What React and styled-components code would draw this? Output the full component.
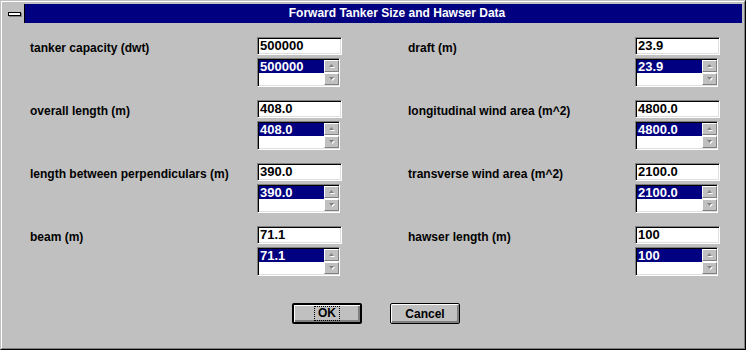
import React from 'react';
import styled, { createGlobalStyle } from 'styled-components';

const Global = createGlobalStyle`
  html, body { margin: 0; padding: 0; background: #c0c0c0; }
  body { font-family: "Liberation Sans", Arial, sans-serif; }
  * { box-sizing: border-box; }
`;

const Window = styled.div`
  width: 746px;
  height: 350px;
  background: #c0c0c0;
  border: 1px solid;
  border-color: #c0c0c0 #000 #000 #c0c0c0;
  display: flex;
  flex-direction: column;
`;

const Frame = styled.div`
  flex: 1;
  border: 1px solid;
  border-color: #fff #808080 #808080 #fff;
  padding: 2px;
  display: flex;
  flex-direction: column;
`;

const TitleBar = styled.div`
  height: 19px;
  display: flex;
  flex-shrink: 0;
`;

const SysBox = styled.div`
  width: 21px;
  background: #c0c0c0;
  border-right: 1px solid #000;
  padding: 8px 0 0 4px;
`;

const SysGlyph = styled.div`
  width: 13px;
  height: 4px;
  background: #fff;
  border: 1px solid #000;
  box-shadow: 1px 1px 0 #808080;
`;

const Caption = styled.div`
  flex: 1;
  background: #000080;
  color: #fff;
  font-weight: bold;
  font-size: 12px;
  line-height: 19px;
  text-align: center;
  padding-left: 27px;
`;

const Content = styled.div`
  padding: 14px 21px 0 26px;
  display: grid;
  grid-template-columns: 378px 1fr;
  row-gap: 13px;
`;

const Field = styled.div`
  display: flex;
  align-items: flex-start;
`;

const Label = styled.div`
  width: 227px;
  font-size: 12px;
  font-weight: bold;
  color: #000;
  line-height: 14px;
  padding-top: 4px;
`;

const Controls = styled.div`
  display: flex;
  flex-direction: column;
  gap: 3px;
`;

const sunken = `
  border: 1px solid;
  border-color: #808080 #fff #fff #808080;
  box-shadow: inset 1px 1px 0 #000, inset -1px -1px 0 #dfdfdf;
`;

const TextBox = styled.div`
  width: 85px;
  height: 18px;
  background: #fff;
  ${sunken}
  font-size: 13px;
  font-weight: bold;
  line-height: 16px;
  padding-left: 2px;
  color: #000;
`;

const ListBox = styled.div`
  width: 83px;
  height: 29px;
  background: #fff;
  ${sunken}
  display: flex;
  padding: 1px 0 1px 1px;
`;

const Items = styled.div`
  flex: 1;
`;

const Selected = styled.div`
  height: 13px;
  background: #000080;
  color: #fff;
  font-size: 13px;
  font-weight: bold;
  line-height: 13px;
  padding-left: 1px;
`;

const ScrollCol = styled.div`
  width: 15px;
  display: flex;
  flex-direction: column;
  gap: 1px;
`;

const ScrollBtn = styled.div`
  flex: 1;
  background: #c0c0c0;
  border: 1px solid;
  border-color: #fff #808080 #808080 #fff;
  display: flex;
  align-items: center;
  justify-content: center;
`;

const Buttons = styled.div`
  display: flex;
  justify-content: center;
  gap: 28px;
  padding: 27px 0 0 6px;
`;

const Button = styled.div`
  width: 70px;
  height: 21px;
  border: ${(p) => (p.$default ? 2 : 1)}px solid #000;
  border-radius: 2px;
  background: #c0c0c0;
  box-shadow: inset 1px 1px 0 #fff, inset -1px -1px 0 #808080, inset -2px -2px 0 #808080;
  display: flex;
  align-items: center;
  justify-content: center;
  font-size: 12px;
  font-weight: bold;
  color: #000;
`;

const Focus = styled.span`
  border: 1px dotted #000;
  padding: 0 3px;
  line-height: 13px;
`;

const Arrow = ({ down }) => (
  <svg width="8" height="6" viewBox="0 0 8 6">
    <path
      d={down ? 'M1 1h5L3.5 4z' : 'M3.5 1L6 4H1z'}
      fill="#fff"
      transform="translate(1 1)"
    />
    <path d={down ? 'M1 1h5L3.5 4z' : 'M3.5 1L6 4H1z'} fill="#808080" />
  </svg>
);

const fields = [
  ['tanker capacity (dwt)', '500000'],
  ['draft (m)', '23.9'],
  ['overall length (m)', '408.0'],
  ['longitudinal wind area (m^2)', '4800.0'],
  ['length between perpendiculars (m)', '390.0'],
  ['transverse wind area (m^2)', '2100.0'],
  ['beam (m)', '71.1'],
  ['hawser length (m)', '100'],
];

export default function App() {
  return (
    <>
      <Global />
      <Window>
        <Frame>
          <TitleBar>
            <SysBox>
              <SysGlyph />
            </SysBox>
            <Caption>Forward Tanker Size and Hawser Data</Caption>
          </TitleBar>
          <Content>
            {fields.map(([label, value]) => (
              <Field key={label}>
                <Label>{label}</Label>
                <Controls>
                  <TextBox>{value}</TextBox>
                  <ListBox>
                    <Items>
                      <Selected>{value}</Selected>
                    </Items>
                    <ScrollCol>
                      <ScrollBtn>
                        <Arrow />
                      </ScrollBtn>
                      <ScrollBtn>
                        <Arrow down />
                      </ScrollBtn>
                    </ScrollCol>
                  </ListBox>
                </Controls>
              </Field>
            ))}
          </Content>
          <Buttons>
            <Button $default>
              <Focus>OK</Focus>
            </Button>
            <Button>Cancel</Button>
          </Buttons>
        </Frame>
      </Window>
    </>
  );
}
